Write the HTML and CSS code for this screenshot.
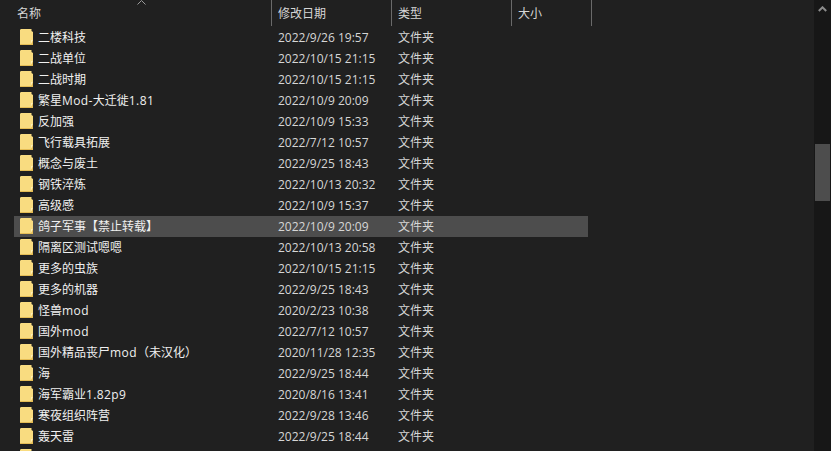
FILE: index.html
```html
<!DOCTYPE html>
<html lang="zh-CN">
<head>
  <meta charset="UTF-8">
  <title>文件夹</title>
  <link rel="stylesheet" href="styles.css">
</head>
<body>
  <svg class="defs" width="0" height="0">
    <symbol id="folder" viewBox="0 0 13 16">
      <path d="M0 1 L0.8 0 L11.5 0 L11.5 2 L13 3 L13 16 L0 16 Z" fill="#f9dc80"/>
      <path d="M0 15 L11 15 L11 11 L13 11 L13 16 L0 16 Z" fill="#e5bd55"/>
      <path d="M11 11 L13 11 L11 15 Z" fill="#fff0b8"/>
    </symbol>
  </svg>

  <div class="explorer">
    <div class="files">
      <div class="head">
        <div class="col col-name">名称<span class="sort-arrow"><svg width="9" height="5" viewBox="0 0 9 5"><path d="M0.5 4.5 L4.5 0.5 L8.5 4.5" fill="none" stroke="#9a9a9a"/></svg></span></div>
        <div class="col col-date">修改日期</div>
        <div class="col col-type">类型</div>
        <div class="col col-size">大小</div>
      </div>

      <div class="row"><svg class="icon"><use href="#folder"/></svg><span class="name">二楼科技</span><span class="date">2022/9/26 19:57</span><span class="type">文件夹</span></div>
      <div class="row"><svg class="icon"><use href="#folder"/></svg><span class="name">二战单位</span><span class="date">2022/10/15 21:15</span><span class="type">文件夹</span></div>
      <div class="row"><svg class="icon"><use href="#folder"/></svg><span class="name">二战时期</span><span class="date">2022/10/15 21:15</span><span class="type">文件夹</span></div>
      <div class="row"><svg class="icon"><use href="#folder"/></svg><span class="name">繁星<span class="ascii">Mod-</span>大迁徙<span class="ascii">1.81</span></span><span class="date">2022/10/9 20:09</span><span class="type">文件夹</span></div>
      <div class="row"><svg class="icon"><use href="#folder"/></svg><span class="name">反加强</span><span class="date">2022/10/9 15:33</span><span class="type">文件夹</span></div>
      <div class="row"><svg class="icon"><use href="#folder"/></svg><span class="name">飞行载具拓展</span><span class="date">2022/7/12 10:57</span><span class="type">文件夹</span></div>
      <div class="row"><svg class="icon"><use href="#folder"/></svg><span class="name">概念与废土</span><span class="date">2022/9/25 18:43</span><span class="type">文件夹</span></div>
      <div class="row"><svg class="icon"><use href="#folder"/></svg><span class="name">钢铁淬炼</span><span class="date">2022/10/13 20:32</span><span class="type">文件夹</span></div>
      <div class="row"><svg class="icon"><use href="#folder"/></svg><span class="name">高级感</span><span class="date">2022/10/9 15:37</span><span class="type">文件夹</span></div>
      <div class="row selected"><svg class="icon"><use href="#folder"/></svg><span class="name">鸽子军事【禁止转载】</span><span class="date">2022/10/9 20:09</span><span class="type">文件夹</span></div>
      <div class="row"><svg class="icon"><use href="#folder"/></svg><span class="name">隔离区测试嗯嗯</span><span class="date">2022/10/13 20:58</span><span class="type">文件夹</span></div>
      <div class="row"><svg class="icon"><use href="#folder"/></svg><span class="name">更多的虫族</span><span class="date">2022/10/15 21:15</span><span class="type">文件夹</span></div>
      <div class="row"><svg class="icon"><use href="#folder"/></svg><span class="name">更多的机器</span><span class="date">2022/9/25 18:43</span><span class="type">文件夹</span></div>
      <div class="row"><svg class="icon"><use href="#folder"/></svg><span class="name">怪兽<span class="ascii">mod</span></span><span class="date">2020/2/23 10:38</span><span class="type">文件夹</span></div>
      <div class="row"><svg class="icon"><use href="#folder"/></svg><span class="name">国外<span class="ascii">mod</span></span><span class="date">2022/7/12 10:57</span><span class="type">文件夹</span></div>
      <div class="row"><svg class="icon"><use href="#folder"/></svg><span class="name">国外精品丧尸<span class="ascii">mod</span>（未汉化）</span><span class="date">2020/11/28 12:35</span><span class="type">文件夹</span></div>
      <div class="row"><svg class="icon"><use href="#folder"/></svg><span class="name">海</span><span class="date">2022/9/25 18:44</span><span class="type">文件夹</span></div>
      <div class="row"><svg class="icon"><use href="#folder"/></svg><span class="name">海军霸业<span class="ascii">1.82p9</span></span><span class="date">2020/8/16 13:41</span><span class="type">文件夹</span></div>
      <div class="row"><svg class="icon"><use href="#folder"/></svg><span class="name">寒夜组织阵营</span><span class="date">2022/9/28 13:46</span><span class="type">文件夹</span></div>
      <div class="row"><svg class="icon"><use href="#folder"/></svg><span class="name">轰天雷</span><span class="date">2022/9/25 18:44</span><span class="type">文件夹</span></div>
      <div class="row"><svg class="icon"><use href="#folder"/></svg></div>
    </div>

    <div class="scrollbar">
      <svg class="scroll-up" width="9" height="6" viewBox="0 0 9 6"><path d="M0.8 5 L4.5 1.3 L8.2 5" fill="none" stroke="#8c8c8c" stroke-width="2"/></svg>
      <div class="scroll-thumb"></div>
    </div>
  </div>
</body>
</html>
```

FILE: styles.css
```css
html, body {
  margin: 0;
  padding: 0;
  height: 100%;
  overflow: hidden;
  background-color: #202020;
}

body {
  font-family: "Open Sans", "Noto Sans CJK SC", sans-serif;
  font-size: 12px;
  color: #f0f0f0;
}

.defs {
  position: absolute;
}

.explorer {
  display: flex;
  height: 451px;
}

.files {
  flex: 1;
  overflow: hidden;
}

.head {
  display: flex;
  height: 27px;
  color: #d6d6d6;
}

.col {
  box-sizing: border-box;
  height: 26px;
  line-height: 26px;
  padding-top: 1px;
  padding-left: 6px;
  border-right: 1px solid #6a6a6a;
}

.col-name {
  position: relative;
  width: 272px;
  padding-left: 17px;
}

.col-date,
.col-type {
  width: 120px;
}

.col-size {
  width: 80px;
}

.sort-arrow {
  position: absolute;
  left: 137px;
  top: 0;
  line-height: 0;
}

.row {
  display: flex;
  align-items: center;
  box-sizing: border-box;
  width: 574px;
  height: 21px;
  margin-left: 14px;
  padding-left: 6px;
  padding-bottom: 1px;
}

.row.selected {
  background-color: #4d4d4d;
}

.icon {
  flex: none;
  width: 13px;
  height: 16px;
  margin-right: 5px;
}

.name {
  width: 240px;
  white-space: nowrap;
}

.ascii {
  letter-spacing: 0.4px;
}

.date {
  width: 120px;
  color: #d6d6d6;
}

.type {
  color: #d6d6d6;
}

.scrollbar {
  position: relative;
  flex: none;
  width: 17px;
  background-color: #171717;
}

.scroll-up {
  position: absolute;
  left: 4px;
  top: 6px;
}

.scroll-thumb {
  position: absolute;
  left: 1px;
  top: 144px;
  width: 15px;
  height: 57px;
  background-color: #4d4d4d;
}
```
